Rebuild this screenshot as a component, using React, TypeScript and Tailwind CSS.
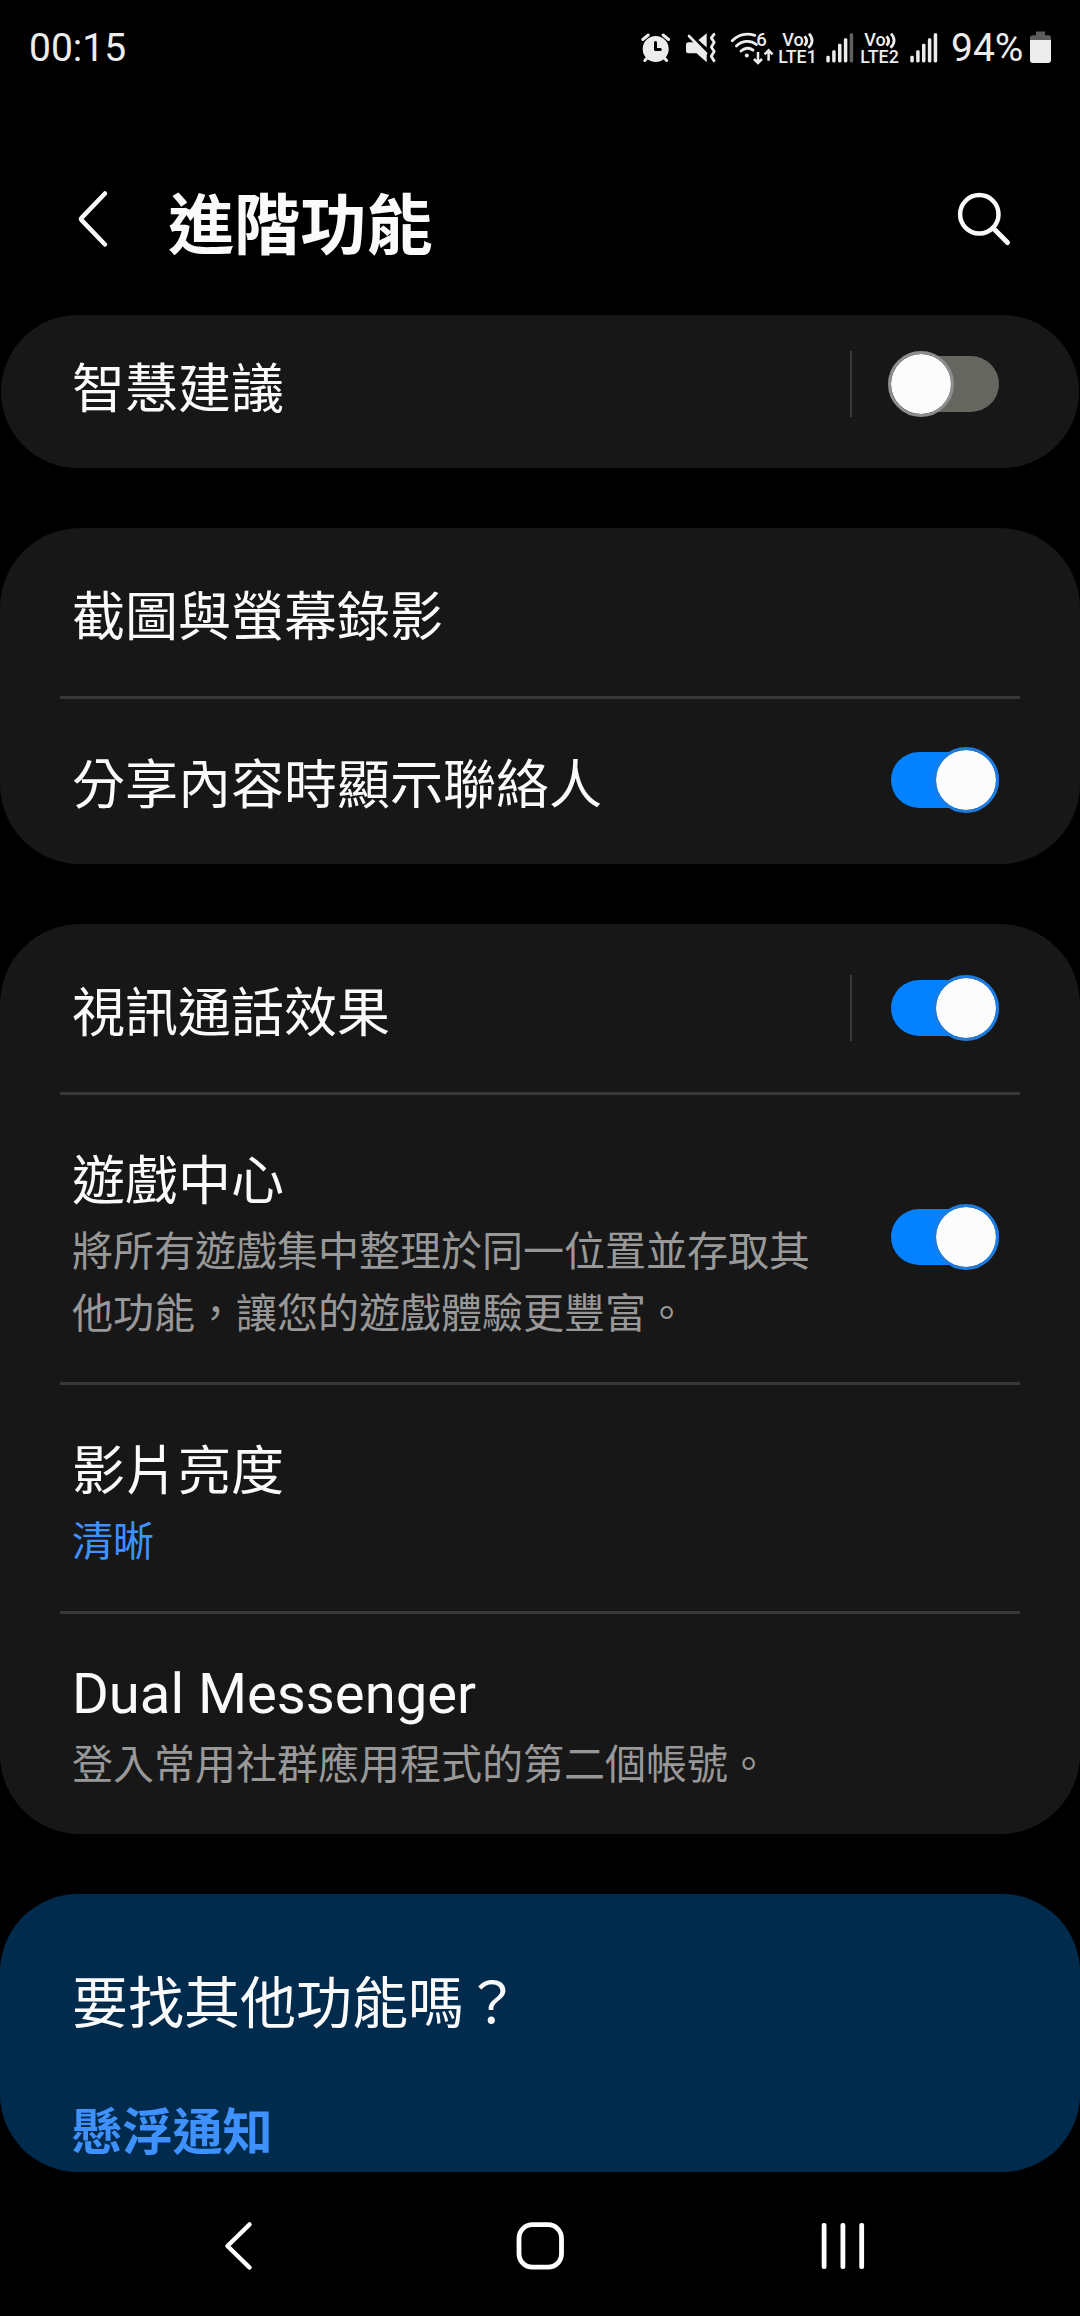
import React, { useState } from 'react';

interface ToggleProps {
  checked: boolean;
  onChange: (next: boolean) => void;
}

const Toggle: React.FC<ToggleProps> = ({ checked, onChange }) => (
  <button
    type="button"
    role="switch"
    aria-checked={checked}
    onClick={() => onChange(!checked)}
    className={`relative h-14 w-[108px] shrink-0 rounded-full ${checked ? 'bg-[#0381fe]' : 'bg-[#65665f]'}`}
  >
    <span
      className={`absolute -top-[5px] size-[66px] rounded-full border-[3px] bg-[#fcfcfc] bg-clip-padding ${
        checked ? 'right-0 border-[#1c7ce0]' : '-left-[3px] border-[#8e8e8e]'
      }`}
    />
  </button>
);

interface SettingRowProps {
  title: string;
  latin?: boolean;
  summary?: string;
  accent?: boolean;
  toggle?: boolean;
  split?: boolean;
  divider?: boolean;
}

const SettingRow: React.FC<SettingRowProps> = ({ title, latin, summary, accent, toggle, split, divider }) => {
  const [on, setOn] = useState(!!toggle);

  return (
    <div>
      {divider && <div className="-mb-[3px] ml-[60px] h-[3px] w-[960px] bg-[#383838]" />}
      <div
        className={`flex items-center justify-between pl-[72px] pr-[81px] ${
          summary ? 'pt-[46px] pb-[41.3px]' : 'h-[168px]'
        }`}
      >
        <div className="w-[750px]">
          <p
            className={
              latin
                ? "font-['Roboto',sans-serif] text-[56.2px] leading-[74px]"
                : summary
                  ? 'h-20 text-[53px] leading-[78px]'
                  : 'pt-0.5 text-[53px] leading-[78px]'
            }
          >
            {title}
          </p>
          {summary && (
            <p className={`text-[41px] leading-[61.5px] ${accent ? 'text-[#3e91ff]' : 'text-[#989898]'}`}>{summary}</p>
          )}
        </div>
        {toggle !== undefined && (
          <div className={`flex items-center ${summary ? 'mb-[5px]' : ''}`}>
            {split && <div className="mr-[39px] h-[66px] w-0.5 bg-[#3a3a3a]" />}
            <Toggle checked={on} onChange={setOn} />
          </div>
        )}
      </div>
    </div>
  );
};

const Card: React.FC<{ children: React.ReactNode }> = ({ children }) => (
  <section className="shrink-0 overflow-hidden rounded-[80px] bg-[#171717]">{children}</section>
);

const AlarmIcon = () => (
  <svg width="32" height="36" viewBox="0 0 32 36" fill="none" strokeLinecap="round">
    <circle cx="15.7" cy="19" r="13" fill="#ececec" />
    <path d="M2.8 9.5 8.3 5M28.6 9.5 23.1 5M7 28 4.8 30.5M24.4 28l2.2 2.5" stroke="#ececec" strokeWidth="3" />
    <path d="M15.5 12.5v7h4.8" stroke="#000" strokeWidth="3" strokeLinejoin="round" />
  </svg>
);

const MuteIcon = () => (
  <svg width="34" height="36" viewBox="0 0 34 36" fill="none" strokeLinecap="round" strokeLinejoin="round">
    <path d="M22.7 3.3v14.2l-8.3-7.6z" fill="#ececec" />
    <path d="M4.5 12.3H11l11.7 12v8L12.5 23.3h-8C3 23.3 2 22.3 2 21v-6.2c0-1.5 1-2.5 2.5-2.5z" fill="#ececec" />
    <path d="m5 6 17 17.5" stroke="#ececec" strokeWidth="2.6" />
    <path d="M30 4.3l-2.7 3.6 2.9 4.3-2.9 4.9 2.9 4.5-2.9 4.6 2.7 4.6" stroke="#ececec" strokeWidth="2.8" />
  </svg>
);

const WifiIcon = () => (
  <svg width="44" height="36" viewBox="0 0 44 36" fill="none" stroke="#ececec" strokeLinecap="round">
    <path d="M2.2 10.8C8.5 4.4 17 2.9 24.8 5.4" strokeWidth="2.8" />
    <path d="M6.4 16c5.4-5.4 14-6.4 20-1.5" strokeWidth="2.8" />
    <path d="M11 21c3.6-3.4 8.6-3.6 12-.9" strokeWidth="2.8" />
    <circle cx="16.8" cy="25.4" r="2" fill="#ececec" stroke="none" />
    <text x="26.3" y="16" fill="#ececec" stroke="none" className="font-['Roboto',sans-serif] text-[18.5px] font-medium">
      6
    </text>
    <path d="M28 22v10.8m-4-3.8 4 4 4-4M38.6 30.8V20.5m-4 3.8 4-4 4 4" strokeWidth="2.5" strokeLinecap="butt" />
  </svg>
);

const VolteIcon: React.FC<{ sim: number }> = ({ sim }) => (
  <svg width="40" height="36" viewBox="0 0 40 36" fill="#ececec" className="font-['Roboto',sans-serif] font-medium">
    <text x="4.3" y="15.9" textLength="21.5" lengthAdjust="spacingAndGlyphs" className="text-[18px]">
      Vo
    </text>
    <path
      d="M26.5 6.2c2.8 2.9 2.8 6.4 0 9.4M31 3.6c4.2 4.4 4.2 9.8-.6 14.2"
      fill="none"
      stroke="#ececec"
      strokeWidth="2.8"
    />
    <text x="0.3" y="32.6" textLength="38.5" lengthAdjust="spacingAndGlyphs" className="text-[17.6px]">
      {`LTE${sim}`}
    </text>
  </svg>
);

const barTops = [25.7, 20.3, 13.7, 8.3, 3.3];

const SignalIcon: React.FC<{ level: number }> = ({ level }) => (
  <svg width="30" height="36" viewBox="0 0 30 36">
    {barTops.map((top, i) => (
      <rect
        key={top}
        x={1.3 + i * 5.85}
        y={top}
        width="3.5"
        height={32.4 - top}
        rx="1.4"
        fill={i < level ? '#ececec' : '#606060'}
      />
    ))}
  </svg>
);

const BatteryIcon = () => (
  <svg width="22" height="36" viewBox="0 0 22 36">
    <path d="M6 1.4h9v3.8h3.5c1.5 0 2.5 1 2.5 2.5V12H0V7.7c0-1.5 1-2.5 2.5-2.5H6z" fill="#5c5c5c" />
    <path d="M0 10h21v20a3 3 0 0 1-3 3H3a3 3 0 0 1-3-3z" fill="#ececec" />
  </svg>
);

const StatusBar = () => (
  <header className="flex h-24 shrink-0 items-center justify-between pl-[29px] pr-7 font-['Roboto',sans-serif] text-[#ececec]">
    <span className="text-[39px] leading-[48px]">00:15</span>
    <div className="flex items-center">
      <AlarmIcon />
      <span className="w-3" />
      <MuteIcon />
      <span className="w-3" />
      <WifiIcon />
      <span className="w-1" />
      <VolteIcon sim={1} />
      <span className="w-[7px]" />
      <SignalIcon level={4} />
      <span className="w-[5px]" />
      <VolteIcon sim={2} />
      <span className="w-[9px]" />
      <SignalIcon level={5} />
      <span className="w-3" />
      <span className="w-[79px] text-[39px] leading-[48px]">94%</span>
      <BatteryIcon />
    </div>
  </header>
);

const TitleBar = () => (
  <div className="flex h-[219px] shrink-0 items-center pt-[34px] pl-[76px] pr-[68px]">
    <svg width="36" height="64" viewBox="0 0 36 64" fill="none" className="mb-2">
      <path
        d="M29 6.5 5.8 30.6a2 2 0 0 0 0 2.8L29 57.5"
        stroke="#fafafa"
        strokeWidth="4.5"
        strokeLinecap="round"
        strokeLinejoin="round"
      />
    </svg>
    <h1 className="mb-1.5 ml-14 flex-1 text-[66.2px] font-bold leading-[96px]">進階功能</h1>
    <svg width="56" height="56" viewBox="0 0 56 56" fill="none" stroke="#fafafa" className="mb-2">
      <circle cx="23.3" cy="23.3" r="19.2" strokeWidth="4.5" />
      <path d="m37 37 14.5 14.5" strokeWidth="5" strokeLinecap="round" />
    </svg>
  </div>
);

const NavBar = () => (
  <nav className="flex h-36 shrink-0 items-center justify-between pt-1 pl-[222px] pr-[213px]">
    <svg width="34" height="52" viewBox="0 0 34 52" fill="none">
      <path d="M27.5 4.5 5.5 26l22 21.5" stroke="#fff" strokeWidth="4.5" strokeLinecap="round" strokeLinejoin="round" />
    </svg>
    <svg width="52" height="52" viewBox="0 0 52 52" fill="none" className="ml-[5px]">
      <rect x="5" y="4.7" width="42.5" height="42.5" rx="13.5" stroke="#fff" strokeWidth="4.8" />
    </svg>
    <svg width="48" height="52" viewBox="0 0 48 52" fill="#fff">
      <rect x="2.7" y="3" width="4.8" height="46" rx="2" />
      <rect x="21.5" y="3" width="4.8" height="46" rx="2" />
      <rect x="40.3" y="3" width="4.8" height="46" rx="2" />
    </svg>
  </nav>
);

const App: React.FC = () => {
  return (
    <div
      lang="zh-Hant"
      className="flex h-[2316px] w-[1080px] flex-col overflow-hidden bg-black font-['Noto_Sans_CJK_TC',sans-serif] text-[#fafafa]"
    >
      <StatusBar />
      <TitleBar />

      <main className="flex h-[1857px] shrink-0 flex-col gap-[60px] overflow-hidden">
        <section className="mx-px h-[153px] shrink-0 overflow-hidden rounded-[77px] bg-[#171717]">
          {/* first row is scrolled slightly under the title bar */}
          <div className="-mx-px -mt-[15px]">
            <SettingRow title="智慧建議" toggle={false} split />
          </div>
        </section>

        <Card>
          <SettingRow title="截圖與螢幕錄影" />
          <SettingRow title="分享內容時顯示聯絡人" toggle divider />
        </Card>

        <Card>
          <SettingRow title="視訊通話效果" toggle split />
          <SettingRow
            title="遊戲中心"
            summary="將所有遊戲集中整理於同一位置並存取其他功能，讓您的遊戲體驗更豐富。"
            toggle
            divider
          />
          <SettingRow title="影片亮度" summary="清晰" accent divider />
          <SettingRow title="Dual Messenger" latin summary="登入常用社群應用程式的第二個帳號。" divider />
        </Card>

        <section className="flex-1 rounded-[78px] bg-[#002b4d] pl-[72px] pt-16">
          <h2 className="text-[56px] leading-[82px]">要找其他功能嗎？</h2>
          <a className="mt-[51px] block text-[50.2px] font-bold leading-[74px] text-[#3e91ff]">懸浮通知</a>
        </section>
      </main>

      <NavBar />
    </div>
  );
};

export default App;
